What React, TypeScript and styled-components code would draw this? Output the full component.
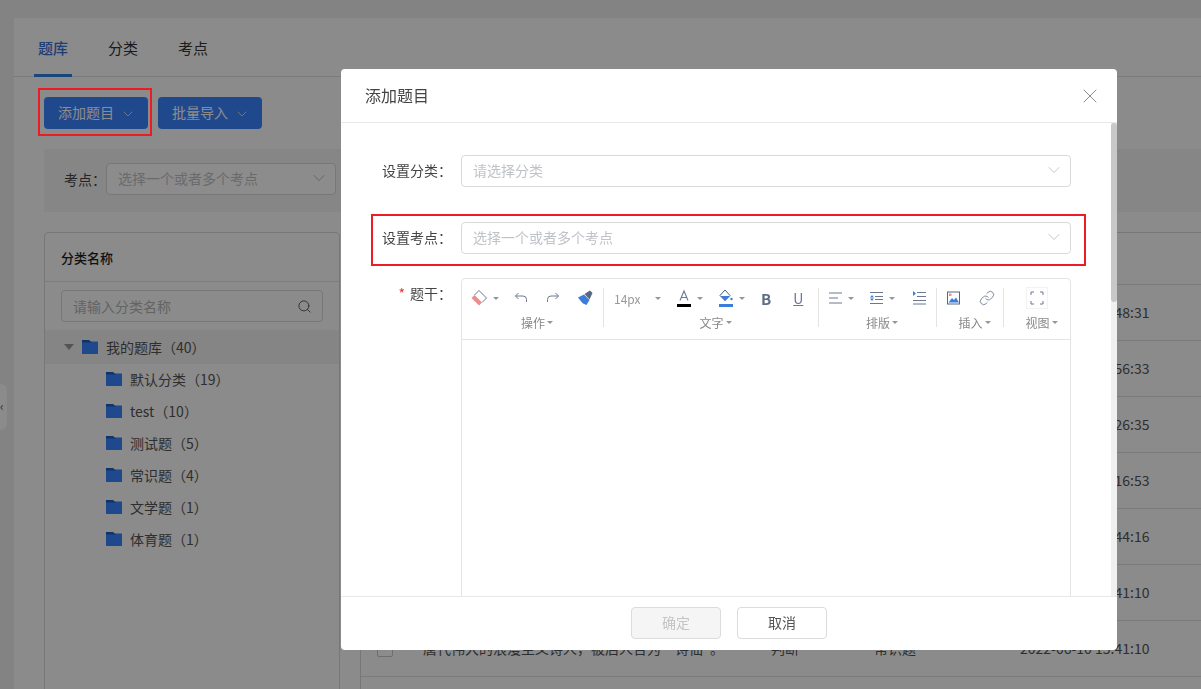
import * as React from 'react';
import styled, { createGlobalStyle } from 'styled-components';
import { ChevronDown, Link as LinkGlyph, Search, X } from 'lucide-react';

const GlobalStyle = createGlobalStyle`
  html, body {
    margin: 0;
    padding: 0;
    height: 100%;
    overflow: hidden;
    background: #eeeeee;
    font-family: "Noto Sans CJK SC", "Noto Sans", sans-serif;
    font-size: 14px;
    color: #333;
  }
  * { box-sizing: border-box; }
`;

const BLUE = '#3a85ff';

const Page = styled.div`
  height: 689px;
  padding: 18px 0 0 14px;
  overflow: hidden;
`;

const CollapseHandle = styled.div`
  position: absolute;
  left: 0;
  top: 384px;
  width: 7px;
  height: 46px;
  border-radius: 0 6px 6px 0;
  background: #fdfdfd;
  color: #555;
  font-size: 12px;
  line-height: 44px;
`;

const Card = styled.div`
  height: 100%;
  background: #fdfdfd;
`;

const Tabs = styled.div`
  display: flex;
  height: 59px;
  padding-left: 20px;
  gap: 32px;
  border-bottom: 1px solid #dfe1e5;
`;

const Tab = styled.div<{ $active?: boolean }>`
  height: 59px;
  width: 38px;
  line-height: 59px;
  text-align: center;
  font-size: 15px;
  font-weight: ${p => (p.$active ? 500 : 400)};
  color: ${p => (p.$active ? '#3a6fd8' : '#333')};
  border-bottom: ${p => (p.$active ? `3px solid #2f80e0` : 'none')};
`;

const Toolbar = styled.div`
  display: flex;
  gap: 10px;
  padding: 20px 0 0 30px;
`;

const PrimaryButton = styled.div`
  display: flex;
  align-items: center;
  justify-content: center;
  gap: 6px;
  width: 104px;
  height: 32px;
  padding: 0 0 2px 2px;
  border-radius: 4px;
  background: ${BLUE};
  color: #fff;
  font-size: 14px;
  svg { margin-top: 3px; }
`;

const FilterBand = styled.div`
  display: flex;
  align-items: flex-start;
  height: 63px;
  margin: 20px 0 0 30px;
  padding: 14px 0 0 20px;
  gap: 1px;
  background: #f4f4f4;
`;

const FilterLabel = styled.div`
  width: 41px;
  line-height: 32px;
  font-size: 14px;
  color: #444;
  white-space: nowrap;
`;

const Select = styled.div<{ $w?: number }>`
  display: flex;
  align-items: center;
  justify-content: space-between;
  flex: ${p => (p.$w ? `0 0 ${p.$w}px` : '1')};
  height: 32px;
  padding: 0 6px 2px 11px;
  border: 1px solid #d9d9d9;
  border-radius: 4px;
  background: #fff;
  color: #bfc2c7;
  font-size: 14px;
`;

const Content = styled.div`
  display: grid;
  grid-template-columns: 296px 1fr;
  gap: 20px;
  margin: 20px 0 0 30px;
`;

const LeftPanel = styled.div`
  height: 470px;
  border: 1px solid #d9d9d9;
  border-radius: 4px 4px 0 0;
  background: #fdfdfd;
`;

const PanelHeader = styled.div`
  height: 49px;
  padding-left: 16px;
  line-height: 49px;
  font-size: 13px;
  font-weight: 500;
  color: #222;
  border-bottom: 1px solid #e4e4e4;
`;

const SearchBox = styled.div`
  display: flex;
  align-items: center;
  justify-content: space-between;
  height: 32px;
  margin: 8px 16px 8px 16px;
  padding: 0 10px 0 11px;
  border: 1px solid #d9d9d9;
  border-radius: 4px;
  color: #b5b5b5;
  font-size: 14px;
  svg { color: #555; }
`;

const TreeRow = styled.div<{ $root?: boolean }>`
  display: flex;
  align-items: center;
  height: ${p => (p.$root ? 34 : 32)}px;
  padding: 0 0 ${p => (p.$root ? 0 : 2)}px ${p => (p.$root ? 19 : 61)}px;
  background: ${p => (p.$root ? '#f2f2f2' : 'transparent')};
  color: #555;
  font-size: 14px;
`;

const TreeCaret = styled.span`
  width: 0;
  height: 0;
  margin-right: 8px;
  border-left: 5px solid transparent;
  border-right: 5px solid transparent;
  border-top: 6px solid #999;
`;

const TreeLabel = styled.span`
  margin-left: 8px;
`;

const TablePanel = styled.div`
  height: 460px;
  border-left: 1px solid #d9d9d9;
  border-top: 1px solid #d9d9d9;
`;

const HeadRow = styled.div`
  height: 52px;
  border-bottom: 1px solid #e0e0e0;
`;

const Row = styled.div`
  display: grid;
  grid-template-columns: 62px 348px 103px 146px 1fr;
  align-items: center;
  height: 56px;
  padding-bottom: 2px;
  border-bottom: 1px solid #e0e0e0;
  color: #555;
  font-size: 14px;
  white-space: nowrap;
`;

const Checkbox = styled.span`
  width: 16px;
  height: 16px;
  margin: 2px 0 0 16px;
  border: 1px solid #c9c9c9;
  border-radius: 2px;
  background: #fff;
`;

const Overlay = styled.div`
  position: fixed;
  inset: 0;
  display: flex;
  padding: 69px 84px 39px 341px;
  background: rgba(0, 0, 0, 0.45);
`;

const Modal = styled.div`
  flex: 1;
  display: flex;
  flex-direction: column;
  min-width: 0;
  border-radius: 4px;
  background: #fff;
  overflow: hidden;
`;

const ModalHeader = styled.div`
  display: flex;
  align-items: center;
  justify-content: space-between;
  flex: 0 0 54px;
  padding: 0 15px 2px 24px;
  border-bottom: 1px solid #e8e8e8;
  font-size: 16px;
  color: #444;
  svg { color: #8a8a8a; margin-top: 2px; }
`;

const ModalBody = styled.div`
  flex: 1;
  min-height: 0;
  display: flex;
  overflow: hidden;
`;

const ScrollTrack = styled.div`
  flex: 0 0 6px;
  background: #f0f0f0;
`;

const ScrollThumb = styled.div`
  height: 179px;
  border-radius: 3px;
  background: #c8c8c8;
`;

const Form = styled.div`
  flex: 1;
  min-width: 0;
  padding: 32px 40px 0 0;
`;

const FormRow = styled.div<{ $mb: number }>`
  display: flex;
  align-items: flex-start;
  margin-bottom: ${p => p.$mb}px;
`;

const FormLabel = styled.div`
  flex: 0 0 120px;
  padding-right: 9px;
  line-height: 30px;
  text-align: right;
  font-size: 14px;
  color: #444;
  white-space: nowrap;
`;

const Required = styled.span`
  margin-right: 5px;
  color: #e5322d;
`;

const Editor = styled.div`
  flex: 1;
  height: 900px;
  border: 1px solid #e4e4e4;
  border-radius: 4px 4px 0 0;
`;

const EditorTools = styled.div`
  display: flex;
  height: 61px;
  padding-top: 9px;
  border-bottom: 1px solid #e4e4e4;
`;

const ToolGroup = styled.div<{ $w: number; $last?: boolean }>`
  flex: 0 0 ${p => p.$w}px;
  height: 39px;
  border-right: ${p => (p.$last ? 'none' : '1px solid #e4e4e4')};
`;

const ToolRow = styled.div<{ $gap?: number; $center?: boolean }>`
  display: flex;
  align-items: center;
  justify-content: ${p => (p.$center ? 'center' : 'flex-start')};
  gap: ${p => p.$gap ?? 16}px;
  height: 20px;
  padding-left: ${p => (p.$center ? 0 : 10)}px;
`;

const Tool = styled.span<{ $ml?: number }>`
  display: flex;
  align-items: center;
  gap: 6px;
  margin-left: ${p => p.$ml ?? 0}px;
  color: #6b7890;
  font-size: 12px;
`;

const SizeText = styled.span`
  width: 35px;
  color: #999;
`;

const BoldGlyph = styled.strong`
  font-size: 15px;
  color: #5f6c84;
`;

const UnderGlyph = styled.u`
  font-size: 14px;
`;

const ToolCaret = styled.span`
  width: 0;
  height: 0;
  border-left: 3px solid transparent;
  border-right: 3px solid transparent;
  border-top: 3px solid #8e97a8;
`;

const GroupLabel = styled.div`
  display: flex;
  align-items: center;
  justify-content: center;
  gap: 2px;
  height: 16px;
  margin-top: 6px;
  padding-left: 9px;
  font-size: 12px;
  color: #888;
`;

const FullBox = styled.span`
  display: flex;
  align-items: center;
  justify-content: center;
  width: 22px;
  height: 22px;
  border: 1px solid #f2f2f2;
  color: #6b7890;
`;

const ModalFooter = styled.div`
  display: flex;
  align-items: center;
  justify-content: center;
  gap: 16px;
  flex: 0 0 54px;
  padding-bottom: 1px;
  border-top: 1px solid #e8e8e8;
`;

const FooterButton = styled.div<{ $disabled?: boolean }>`
  width: 90px;
  height: 32px;
  line-height: 28px;
  text-align: center;
  font-size: 14px;
  border: 1px solid #dcdcdc;
  border-radius: 4px;
  color: ${p => (p.$disabled ? '#c4c4c4' : '#555')};
  background: ${p => (p.$disabled ? '#f5f5f5' : '#fff')};
`;

// red marks drawn on top of the screenshot, they are not part of the page
const Highlight = styled.div<{ $l: number; $t: number; $w: number; $h: number }>`
  position: fixed;
  left: ${p => p.$l}px;
  top: ${p => p.$t}px;
  width: ${p => p.$w}px;
  height: ${p => p.$h}px;
  border: 2px solid #ed1c24;
  pointer-events: none;
`;

const Folder = () => (
  <svg width="16" height="14" viewBox="0 0 16 14">
    <rect y="1.5" width="16" height="12.5" fill={BLUE} />
    <path d="M0 0h7l3 2.5H0z" fill="#1d5fc4" />
  </svg>
);

const Icon = ({ w = 16, children }: { w?: number; children: React.ReactNode }) => (
  <svg width={w} height="16" viewBox={`0 0 ${w} 16`} fill="none" stroke="currentColor" strokeWidth="1">
    {children}
  </svg>
);

const EraserIcon = () => (
  <Icon>
    <path d="M3.500 5 8 .5 15.500 8 11 12.500" />
    <path d="M.5 8 8 15.500l3-3L3.500 5z" fill="#ee8d8d" stroke="none" />
  </Icon>
);

const UndoIcon = () => (
  <Icon w={14}>
    <path d="M4.500 3 1.500 6l3 3M1.500 6H9a3.500 3.500 0 0 1 3.500 3.500V12" />
  </Icon>
);

const RedoIcon = () => (
  <Icon w={14}>
    <path d="M9.500 3l3 3-3 3M12.500 6H5A3.500 3.500 0 0 0 1.500 9.500V12" />
  </Icon>
);

const BrushIcon = () => (
  <Icon>
    <path d="M0 7.500 6 4.500 11.500 10 8.500 15 5 13.500 3.500 12z" fill="#3b7ddd" stroke="none" />
    <path d="M6.500 4 12 .5 14.500 3 11.500 9.500z" fill="#596782" stroke="none" />
  </Icon>
);

const TextColorIcon = () => (
  <svg width="14" height="18" viewBox="0 0 14 18" fill="none">
    <path d="M3 11.500 7 2l4 9.500M4.500 8.500h5" stroke="#6b7890" strokeWidth="1.100" />
    <rect y="15" width="14" height="3" fill="#000" />
  </svg>
);

const FillColorIcon = () => (
  <svg width="14" height="18" viewBox="0 0 14 18" fill="none">
    <path d="M6 1 1 6.500l5 5 5-5z" stroke="#4c5a74" />
    <path d="M1.500 7h9.500L6 12z" fill="#3b7ddd" />
    <circle cx="12.500" cy="10" r="1.200" fill="#3b7ddd" />
    <rect y="15" width="14" height="3" fill="#3b7ddd" />
  </svg>
);

const AlignIcon = () => (
  <Icon w={13}>
    <path d="M0 3h13M0 8h9M0 13h13" />
  </Icon>
);

const LineHeightIcon = () => (
  <Icon w={13}>
    <path d="M0 2.500h13M5 6.500h8M5 9.500h8M0 13.500h13" />
    <path d="M2 5 0 7.500h4zM2 11 0 8.500h4z" fill="#3b7ddd" stroke="none" />
  </Icon>
);

const IndentIcon = () => (
  <Icon w={13}>
    <path d="M4 2.500h9M4 6.500h9M0 10.500h13M0 14h13" />
    <path d="M0 1v5l3-2.500z" fill="#3b7ddd" stroke="none" />
  </Icon>
);

const ImageIcon = () => (
  <Icon w={13}>
    <rect x=".5" y="2" width="12" height="12" stroke="#59667e" />
    <rect x="2" y="3.500" width="2.500" height="2.500" fill="#ee8d8d" stroke="none" />
    <path d="M1.500 12.500 5 8l2 2 2-2.500 3 5z" fill="#3b7ddd" stroke="none" />
  </Icon>
);

const FullscreenIcon = () => (
  <Icon w={14}>
    <path d="M1 5V2h3M10 2h3v3M1 11v3h3M10 14h3v-3" />
  </Icon>
);

const children = ['默认分类（19）', 'test（10）', '测试题（5）', '常识题（4）', '文学题（1）', '体育题（1）'];
const times = ['15:48:31', '15:56:33', '15:26:35', '15:16:53', '15:44:16', '15:41:10'];

const App = () => (
  <>
    <GlobalStyle />
    <Page>
      <CollapseHandle>‹</CollapseHandle>
      <Card>
        <Tabs>
          <Tab $active>题库</Tab>
          <Tab>分类</Tab>
          <Tab>考点</Tab>
        </Tabs>
        <Toolbar>
          <PrimaryButton>添加题目 <ChevronDown size={16} strokeWidth={1} /></PrimaryButton>
          <PrimaryButton>批量导入 <ChevronDown size={16} strokeWidth={1} /></PrimaryButton>
        </Toolbar>
        <FilterBand>
          <FilterLabel>考点：</FilterLabel>
          <Select $w={230}>选择一个或者多个考点 <ChevronDown size={20} strokeWidth={1} color="#aaa" /></Select>
        </FilterBand>
        <Content>
          <LeftPanel>
            <PanelHeader>分类名称</PanelHeader>
            <SearchBox>请输入分类名称 <Search size={15} strokeWidth={1.5} /></SearchBox>
            <TreeRow $root>
              <TreeCaret />
              <Folder />
              <TreeLabel>我的题库（40）</TreeLabel>
            </TreeRow>
            {children.map(c => (
              <TreeRow key={c}>
                <Folder />
                <TreeLabel>{c}</TreeLabel>
              </TreeRow>
            ))}
          </LeftPanel>
          <TablePanel>
            <HeadRow />
            {times.map(t => (
              <Row key={t}>
                <span />
                <span />
                <span />
                <span />
                <span>2022-06-10 {t}</span>
              </Row>
            ))}
            <Row>
              <Checkbox />
              <span>唐代伟大的浪漫主义诗人，被后人合为“诗仙”。</span>
              <span>判断</span>
              <span>常识题</span>
              <span>2022-06-10 15:41:10</span>
            </Row>
          </TablePanel>
        </Content>
      </Card>
    </Page>
    <Overlay>
      <Modal>
        <ModalHeader>
          添加题目
          <X size={24} strokeWidth={1} />
        </ModalHeader>
        <ModalBody>
          <Form>
            <FormRow $mb={35}>
              <FormLabel>设置分类：</FormLabel>
              <Select>请选择分类 <ChevronDown size={20} strokeWidth={1} color="#bbb" /></Select>
            </FormRow>
            <FormRow $mb={24}>
              <FormLabel>设置考点：</FormLabel>
              <Select>选择一个或者多个考点 <ChevronDown size={20} strokeWidth={1} color="#bbb" /></Select>
            </FormRow>
            <FormRow $mb={24}>
              <FormLabel><Required>*</Required>题干：</FormLabel>
              <Editor>
                <EditorTools>
                  <ToolGroup $w={142}>
                    <ToolRow $gap={18}>
                      <Tool $ml={-1}><EraserIcon /><ToolCaret /></Tool>
                      <Tool $ml={-3}><UndoIcon /></Tool>
                      <Tool><RedoIcon /></Tool>
                      <Tool><BrushIcon /></Tool>
                    </ToolRow>
                    <GroupLabel>操作<ToolCaret /></GroupLabel>
                  </ToolGroup>
                  <ToolGroup $w={215}>
                    <ToolRow>
                      <Tool><SizeText>14px</SizeText><ToolCaret /></Tool>
                      <Tool><TextColorIcon /><ToolCaret /></Tool>
                      <Tool><FillColorIcon /><ToolCaret /></Tool>
                      <Tool><BoldGlyph>B</BoldGlyph></Tool>
                      <Tool $ml={6}><UnderGlyph>U</UnderGlyph></Tool>
                    </ToolRow>
                    <GroupLabel>文字<ToolCaret /></GroupLabel>
                  </ToolGroup>
                  <ToolGroup $w={118}>
                    <ToolRow>
                      <Tool><AlignIcon /><ToolCaret /></Tool>
                      <Tool><LineHeightIcon /><ToolCaret /></Tool>
                      <Tool $ml={2}><IndentIcon /></Tool>
                    </ToolRow>
                    <GroupLabel>排版<ToolCaret /></GroupLabel>
                  </ToolGroup>
                  <ToolGroup $w={67}>
                    <ToolRow $gap={19}>
                      <Tool><ImageIcon /></Tool>
                      <Tool><LinkGlyph size={16} strokeWidth={1.3} /></Tool>
                    </ToolRow>
                    <GroupLabel>插入<ToolCaret /></GroupLabel>
                  </ToolGroup>
                  <ToolGroup $w={66} $last>
                    <ToolRow $center>
                      <FullBox><FullscreenIcon /></FullBox>
                    </ToolRow>
                    <GroupLabel>视图<ToolCaret /></GroupLabel>
                  </ToolGroup>
                </EditorTools>
              </Editor>
            </FormRow>
          </Form>
          <ScrollTrack>
            <ScrollThumb />
          </ScrollTrack>
        </ModalBody>
        <ModalFooter>
          <FooterButton $disabled>确定</FooterButton>
          <FooterButton>取消</FooterButton>
        </ModalFooter>
      </Modal>
    </Overlay>
    <Highlight $l={38} $t={88} $w={114} $h={48} />
    <Highlight $l={371} $t={214} $w={715} $h={52} />
  </>
);

export default App;
